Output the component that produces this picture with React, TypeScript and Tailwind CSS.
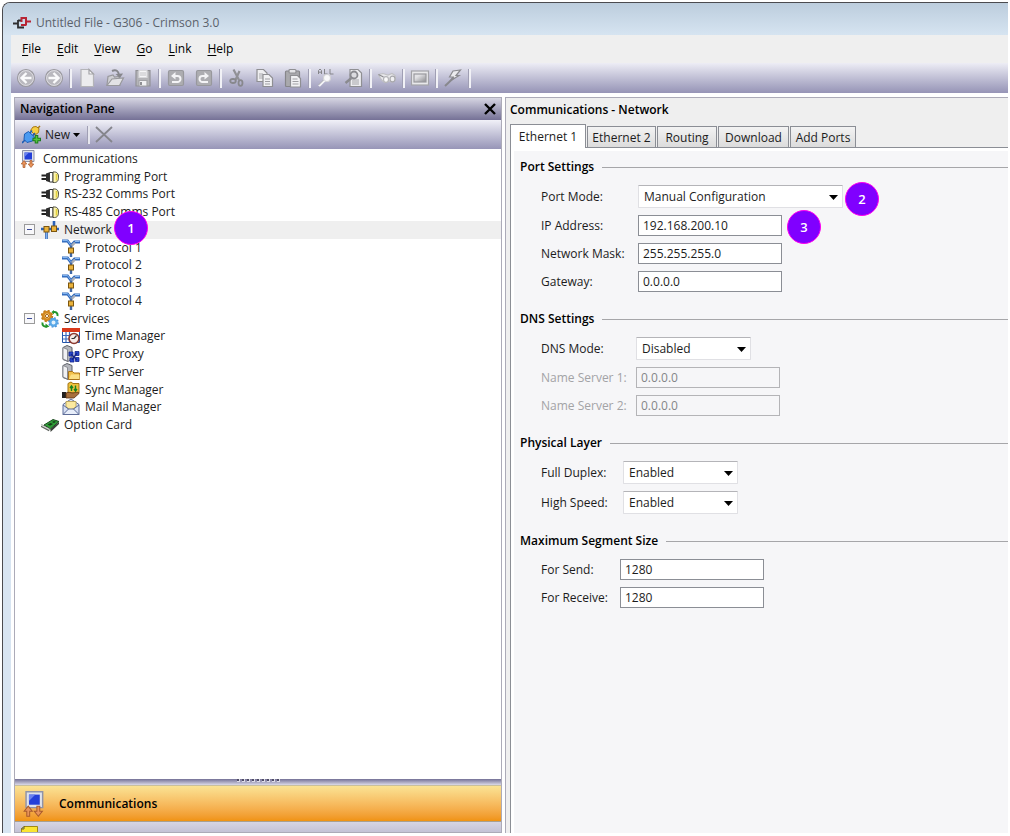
import { useState } from 'react';
import type { ReactNode } from 'react';
import clsx from 'clsx';

/* ---------- Toolbar icons ---------- */

const ToolIcon = ({ children }: { children: ReactNode }) => (
  <svg width="20" height="20" viewBox="0 0 20 20" fill="none" stroke="#8f8f93" strokeWidth="1.2" aria-hidden="true">
    {children}
  </svg>
);

const BackIcon = () => (
  <ToolIcon>
    <circle cx="10" cy="10" r="8.5" fill="#b9b8be" stroke="#9b9aa0" />
    <circle cx="10" cy="10" r="7.4" stroke="#dddce2" strokeWidth="1" />
    <path d="M15.500 10H6M10.500 5 5.500 10l5 5" stroke="#fbfbfc" strokeWidth="2.4" />
  </ToolIcon>
);

const ForwardIcon = () => (
  <ToolIcon>
    <circle cx="10" cy="10" r="8.5" fill="#b9b8be" stroke="#9b9aa0" />
    <circle cx="10" cy="10" r="7.4" stroke="#dddce2" strokeWidth="1" />
    <path d="M4.500 10H14M9.500 5l5 5-5 5" stroke="#fbfbfc" strokeWidth="2.4" />
  </ToolIcon>
);

const NewFileIcon = () => (
  <ToolIcon>
    <path d="M4 1.500h8l4.500 4.500v12.500H4z" fill="#ececee" stroke="#b4b4b8" />
    <path d="M12 1.500V6h4.500z" fill="#fff" stroke="#a4a4a8" />
  </ToolIcon>
);

const OpenIcon = () => (
  <ToolIcon>
    <path d="m2 17 1-8.500 5-1.500 1.500 2L14 8.500 15 17z" fill="#cfcfd3" stroke="#98989c" />
    <path d="M2 17.500 7 11l11.500-1-4 7.500z" fill="#e2e2e5" stroke="#98989c" />
    <path d="M7 3c4-2 6.500 0 7 4" stroke="#86868b" strokeWidth="2" />
    <path d="m10.500 6 7.500-.500-3 4.500z" fill="#86868b" stroke="none" />
  </ToolIcon>
);

const SaveIcon = () => (
  <ToolIcon>
    <path d="M3 2.500h14v15.500H3z" fill="#b4b4b8" stroke="#929297" />
    <path d="M6 2.500h8V9.500H6z" fill="#f5f5f7" stroke="#d8d8db" />
    <path d="M7 5h6M7 7h6" stroke="#c0c0c3" strokeWidth="1" />
    <path d="M6 12.500h8V18H6z" fill="#f1f1f3" stroke="#a3a3a7" />
    <path d="M8 14v3" strokeWidth="2" />
  </ToolIcon>
);

const UndoIcon = () => (
  <ToolIcon>
    <rect x="2.500" y="2.500" width="15" height="15" rx="1.500" fill="#adadb1" stroke="#98989d" />
    <path d="M6 14h5.500a3 3 0 0 0 0-6H7" stroke="#f4f4f6" strokeWidth="2" />
    <path d="M9.500 4 5 8l4.500 3.500z" fill="#f4f4f6" stroke="none" />
  </ToolIcon>
);

const RedoIcon = () => (
  <ToolIcon>
    <rect x="2.500" y="2.500" width="15" height="15" rx="1.500" fill="#adadb1" stroke="#98989d" />
    <path d="M14 14H8.500a3 3 0 0 1 0-6H13" stroke="#f4f4f6" strokeWidth="2" />
    <path d="M10.500 4 15 8l-4.500 3.500z" fill="#f4f4f6" stroke="none" />
  </ToolIcon>
);

const CutIcon = () => (
  <ToolIcon>
    <path d="M6.500 1.500 12 12M12.500 3 8.500 12" stroke="#919196" strokeWidth="2.200" />
    <ellipse cx="6" cy="13" rx="2.800" ry="2" stroke="#88888d" strokeWidth="1.800" />
    <ellipse cx="13.500" cy="15" rx="2" ry="2.800" stroke="#88888d" strokeWidth="1.800" />
  </ToolIcon>
);

const CopyIcon = () => (
  <ToolIcon>
    <path d="M2 1.500h6.500L12 5v8.500H2z" fill="#eeeef0" />
    <path d="M4 6h4M4 8h4M4 10h4" stroke="#a8a8ac" />
    <path d="M8 6.500h6l3.500 3.500v8.500H8z" fill="#f1f1f3" />
    <path d="M10 11h5M10 13.500h5M10 16h5" stroke="#a0a0a4" />
  </ToolIcon>
);

const PasteIcon = () => (
  <ToolIcon>
    <rect x="2.500" y="3" width="14" height="15.500" rx="1" fill="#a9a9ad" stroke="#86868a" />
    <rect x="6" y="1.500" width="7" height="3.500" rx="1" fill="#e4e4e7" />
    <path d="M7.500 7.500h7l3 3v8.500H7.500z" fill="#f2f2f4" />
    <path d="M9.500 11h5M9.500 13.500h6M9.500 16h6" stroke="#a0a0a4" />
  </ToolIcon>
);

const FindAllIcon = () => (
  <ToolIcon>
    <path d="M2.500 6V2.500L4 1l1.500 1.500V6M2.500 4.200h3M8.500 1v5h3M14 1v5h3.500" stroke="#85858a" strokeWidth="1" />
    <circle cx="11" cy="10" r="3.500" fill="#f8f8fa" stroke="#d2d2d6" />
    <path d="m8.500 12.500-5.500 5.500" stroke="#f4f4f6" strokeWidth="2.400" />
    <path d="m7.500 12-5 5" stroke="#a5a5aa" strokeWidth="1" />
  </ToolIcon>
);

const FindFileIcon = () => (
  <ToolIcon>
    <path d="M6 1.500h8L17.500 5v13.500H6z" fill="#ededf0" />
    <path d="M8 12h7M8 14h7M8 16h7" stroke="#a6a6aa" strokeWidth="1" />
    <circle cx="10" cy="7" r="3.500" fill="#dcdce0" stroke="#8a8a8f" strokeWidth="1.800" />
    <path d="m7.500 10-6 5" stroke="#8a8a8f" strokeWidth="2.400" />
  </ToolIcon>
);

const BinocularsIcon = () => (
  <ToolIcon>
    <path d="M1.500 6.500 6 5.500l5 1.500 4-1.500 3 2c1.500 4-.500 6.500-3.500 6.500L12 13l-3 1.500c-3 0-5.500-3.500-7.500-8z" fill="#e9e9ec" stroke="#c0c0c4" />
    <ellipse cx="9" cy="11.500" rx="2.500" ry="2.800" fill="#fbfbfc" stroke="#b6b6ba" />
    <ellipse cx="15.500" cy="11" rx="2.500" ry="2.800" fill="#f0f0f2" stroke="#a8a8ac" />
    <path d="m1.500 6.500 5 2.500" stroke="#8b8b90" />
  </ToolIcon>
);

const ScreenIcon = () => (
  <ToolIcon>
    <defs>
      <linearGradient id="screenShade" x1="0" y1="0" x2="1" y2="1">
        <stop offset="0.300" stopColor="#e2e2e5" />
        <stop offset="1" stopColor="#8b8b8f" />
      </linearGradient>
    </defs>
    <rect x="1.500" y="3" width="17" height="14" fill="#e8e8ea" stroke="#a3a3a8" />
    <rect x="4" y="6" width="12" height="8" fill="url(#screenShade)" stroke="#99999e" />
  </ToolIcon>
);

const BoltIcon = () => (
  <ToolIcon>
    <path d="M10 3 17.500 2 13 7.500h3L7 13l3-4H6.500z" fill="#ebebee" stroke="#8a8a8f" />
    <path d="M2 18 11 9.500" stroke="#88888d" strokeWidth="2" />
  </ToolIcon>
);

/* ---------- Tree icons ---------- */

const TreeIcon = ({ children, size = 18 }: { children: ReactNode; size?: number }) => (
  <svg width={size} height={size} viewBox="0 0 18 18" fill="none" className="shrink-0" aria-hidden="true">
    {children}
  </svg>
);

const CommsIcon = ({ size = 18 }: { size?: number }) => (
  <TreeIcon size={size}>
    <path d="M3.500 .500h11.500v11H3.500z" fill="#dfe2ea" stroke="#8f93a8" />
    <path d="M5.500 2.500h7.500v7H5.500z" fill="#2440d8" />
    <path d="M5.500 2.500h4.500L5.500 7z" fill="#6a82ee" />
    <path d="M5 10.500 7.800 14H6v3.500H4V14H2.200zM12 17.500 9.200 14H11v-3.500h2V14h1.800z" fill="#e8935a" stroke="#a85a2c" strokeWidth=".7" />
  </TreeIcon>
);

const PortIcon = () => (
  <TreeIcon>
    <path d="M.500 7.500H6M.500 11H6" stroke="#222" strokeWidth="2" />
    <path d="M5 5.500 8 4.500v9.500l-3-1z" fill="#2d2d2d" />
    <path d="M8.500 4.500H12v9.500H8.500z" fill="#fff" stroke="#333" />
    <path d="M12 4c4.500-.500 5.500 2 5.500 5.200S16.500 15 12 14.500z" fill="#fbf3b0" stroke="#4a4a3c" />
    <path d="M15.500 6v6.500" stroke="#e3d23c" strokeWidth="1.600" />
  </TreeIcon>
);

const NetworkIcon = () => (
  <TreeIcon>
    <path d="M0 8h18" stroke="#2b62b8" strokeWidth="2.400" />
    <path d="M5.500 9v9M13 0v8" stroke="#2b62b8" strokeWidth="2.600" />
    <path d="M5.500 11v7" stroke="#7fb0ee" strokeWidth="1" />
    <rect x="3" y="5.500" width="5" height="5.500" fill="#e9b23c" stroke="#7d560f" />
    <rect x="10.500" y="5" width="5" height="5.500" fill="#e9b23c" stroke="#7d560f" />
  </TreeIcon>
);

const ProtocolIcon = () => (
  <TreeIcon>
    <path d="M0 2h5.500L9 6.500 12.500 3H18" stroke="#2f68bc" strokeWidth="2.800" />
    <path d="M.500 1.600H5.500l3 4M13 2.500h4.500" stroke="#8cbcf4" strokeWidth="1" />
    <path d="m9 7.500 4-4" stroke="#a9aeb8" strokeWidth="2.400" />
    <path d="M9 6.500v11.500" stroke="#3f68a8" strokeWidth="2.400" />
    <rect x="6.500" y="9" width="5" height="5" fill="#e9b23c" stroke="#7d560f" />
  </TreeIcon>
);

const ServicesIcon = () => (
  <TreeIcon>
    <circle cx="6" cy="6" r="3.800" fill="#f6e0b4" stroke="#d48a22" strokeWidth="2.800" />
    <circle cx="6" cy="6" r="5.400" stroke="#c07a18" strokeWidth="1.600" strokeDasharray="2.200 2.040" />
    <circle cx="6" cy="6" r="1.600" fill="#fff" stroke="#a8640e" />
    <circle cx="12.500" cy="12.500" r="3.200" fill="#e4f2fc" stroke="#5aa9e8" strokeWidth="2.400" />
    <circle cx="12.500" cy="12.500" r="4.600" stroke="#4a94dc" strokeWidth="1.400" strokeDasharray="1.800 1.810" />
    <path d="M12.500 2c2.500-.500 4.500 1 4 4M6 16.500c-3 .500-5-1-4.500-4" stroke="#23962c" strokeWidth="2" />
    <path d="m4.500 13.500 4 3-4 1.500zM13 0v4.500L10.500 2z" fill="#23962c" />
  </TreeIcon>
);

const TimeIcon = () => (
  <TreeIcon>
    <path d="M.500 1.500h17v14H.500z" fill="#fff" stroke="#2454a8" />
    <path d="M0 1h18v4H0z" fill="#d83a1c" />
    <path d="M1 8.500h9M1 12h9M4 5v10M7.500 5v10" stroke="#3a6bc0" strokeWidth="1.200" />
    <circle cx="12" cy="11.500" r="5" fill="#f8ece8" stroke="#8c3a30" strokeWidth="1.600" />
    <path d="m12 11.500 2.500-3M12 11.500H9.500" stroke="#333" strokeWidth="1.200" />
  </TreeIcon>
);

const ServerBody = () => (
  <>
    <path d="m1 2.500 4-2 5 2v11l-4 3-5-2z" fill="#b4b6bc" stroke="#5e6168" />
    <path d="m1 2.500 4.500 2v11.500L1 14z" fill="#f1f1f3" stroke="#777a82" strokeWidth=".8" />
  </>
);

const OpcIcon = () => (
  <TreeIcon>
    <ServerBody />
    <path d="M7 7h4v4H7zM13 6.500h4v4h-4zM8 13h4v4H8zM13.500 12.500H17v4h-3.500z" fill="#2748d0" stroke="#14248a" strokeWidth=".8" />
    <path d="m9 9 6 6M15 8l-5 7" stroke="#14248a" strokeWidth="1.300" />
  </TreeIcon>
);

const FtpIcon = () => (
  <TreeIcon>
    <ServerBody />
    <path d="M6.500 16.500V8.500h4l1.500 1.500h5.500v6.500z" fill="#f2c04a" stroke="#a8721a" />
    <path d="m7 16 2-4.500h8.500V16z" fill="#fbdf86" />
  </TreeIcon>
);

const SyncIcon = () => (
  <TreeIcon>
    <path d="M6 2.500 9 1l2 1.500h6V12H6z" fill="#f0c23c" stroke="#a37412" />
    <path d="M9.500 10V5.500M8 7l1.500-2L11 7M13.500 4.500V9M12 8l1.500 2L15 8" stroke="#17821f" strokeWidth="1.400" />
    <path d="M0 11h4v6H0z" fill="#222" />
    <path d="M4 12c3-1.500 4 0 7 0 4-1 6-1 6 .500L12 17H4z" fill="#a8703c" stroke="#5b3312" strokeWidth=".8" />
  </TreeIcon>
);

const MailIcon = () => (
  <TreeIcon>
    <path d="m1 6.500 8-5.500 8 5.500v10H1z" fill="#d7e0f4" stroke="#5d6c98" />
    <path d="M4 3.500h10V9l-5 3-5-3z" fill="#fbe9a0" stroke="#b59c4a" strokeWidth=".8" />
    <path d="m1 16.500 5.500-5.500h5l5.500 5.500zM1 7l5.500 4M17 7l-5.500 4" fill="#e8eefa" stroke="#5d6c98" />
  </TreeIcon>
);

const CardIcon = () => (
  <TreeIcon>
    <path d="m3 9 9-5.500 6 2-8.500 7.500z" fill="#2f9c38" stroke="#1c4a20" />
    <path d="m9.500 13 8.500-7v2L9.500 16z" fill="#3a3f3a" />
    <path d="m6.500 8.500 3-1.500 2.500 1-3 1.700zM11 6l2-1 2 .800-2 1.200z" fill="#173d1a" />
    <path d="m0 9.500 8.500 4.500" stroke="#5e635e" strokeWidth="2.600" />
    <path d="m0 9 8.500 4.500" stroke="#d9dcd7" strokeWidth="1.200" />
  </TreeIcon>
);

/* ---------- Data ---------- */

const menus = ['File', 'Edit', 'View', 'Go', 'Link', 'Help'];

const toolGroups = [
  [
    { label: 'Back', Icon: BackIcon },
    { label: 'Forward', Icon: ForwardIcon },
  ],
  [
    { label: 'New', Icon: NewFileIcon },
    { label: 'Open', Icon: OpenIcon },
    { label: 'Save', Icon: SaveIcon },
  ],
  [
    { label: 'Undo', Icon: UndoIcon },
    { label: 'Redo', Icon: RedoIcon },
  ],
  [
    { label: 'Cut', Icon: CutIcon },
    { label: 'Copy', Icon: CopyIcon },
    { label: 'Paste', Icon: PasteIcon },
  ],
  [
    { label: 'Find all', Icon: FindAllIcon },
    { label: 'Find in file', Icon: FindFileIcon },
  ],
  [{ label: 'Watch', Icon: BinocularsIcon }],
  [{ label: 'Screen', Icon: ScreenIcon }],
  [{ label: 'Download', Icon: BoltIcon }],
];

const indents = ['pl-1', 'pl-[26px]', 'pl-[47px]'];

const tree = [
  { label: 'Communications', level: 0, Icon: CommsIcon },
  { label: 'Programming Port', level: 1, Icon: PortIcon },
  { label: 'RS-232 Comms Port', level: 1, Icon: PortIcon },
  { label: 'RS-485 Comms Port', level: 1, Icon: PortIcon },
  { label: 'Network', level: 1, Icon: NetworkIcon, open: true, step: 1 },
  { label: 'Protocol 1', level: 2, Icon: ProtocolIcon },
  { label: 'Protocol 2', level: 2, Icon: ProtocolIcon },
  { label: 'Protocol 3', level: 2, Icon: ProtocolIcon },
  { label: 'Protocol 4', level: 2, Icon: ProtocolIcon },
  { label: 'Services', level: 1, Icon: ServicesIcon, open: true },
  { label: 'Time Manager', level: 2, Icon: TimeIcon },
  { label: 'OPC Proxy', level: 2, Icon: OpcIcon },
  { label: 'FTP Server', level: 2, Icon: FtpIcon },
  { label: 'Sync Manager', level: 2, Icon: SyncIcon },
  { label: 'Mail Manager', level: 2, Icon: MailIcon },
  { label: 'Option Card', level: 1, Icon: CardIcon },
];

const tabs = [
  { label: 'Ethernet 1', width: 'w-[76px]' },
  { label: 'Ethernet 2', width: 'w-[69px]' },
  { label: 'Routing', width: 'w-[60px]' },
  { label: 'Download', width: 'w-[71px]' },
  { label: 'Add Ports', width: 'w-[66px]' },
];

/* ---------- Shared pieces ---------- */

const Separator = () => (
  <div className="w-[5px] flex justify-center">
    <div className="w-[3px] h-[19px] border-l border-[#a09fb4] bg-[#f1f1f6]"></div>
  </div>
);

const StepBadge = ({ step, className }: { step: number; className: string }) => (
  <span
    className={clsx(
      'absolute z-10 w-[34px] h-[34px] rounded-full bg-[#8000ff] border border-[#ff00f0] text-white text-[13px] font-semibold flex items-center justify-center',
      className,
    )}
  >
    {step}
  </span>
);

function Section({ title, children, className }: { title: string; children: ReactNode; className?: string }) {
  return (
    <section className={className}>
      <div className="flex items-center gap-2 h-5">
        <h2 className="font-semibold text-black whitespace-nowrap">{title}</h2>
        <div className="flex-1 h-px bg-[#a6a6a9]"></div>
      </div>
      {children}
    </section>
  );
}

type FieldProps = {
  id: string;
  label: string;
  value: string;
  labelWidth: string;
  disabled?: boolean;
  step?: number;
};

function TextField({ id, label, value, labelWidth, disabled, step }: FieldProps) {
  return (
    <div className="flex items-center">
      <label htmlFor={id} className={clsx('shrink-0 whitespace-nowrap', labelWidth, disabled && 'text-[#a3a3a6]')}>
        {label}
      </label>
      <div className="relative">
        <input
          id={id}
          type="text"
          defaultValue={value}
          disabled={disabled}
          className={clsx(
            'block w-36 h-[21px] px-1 border outline-none',
            disabled ? 'border-[#b4b4b7] bg-[#f6f6f8] text-[#858588]' : 'border-[#8b8e95] bg-white',
          )}
        />
        {step && <StepBadge step={step} className="left-[149px] -top-[5px]" />}
      </div>
    </div>
  );
}

function SelectField({ id, label, value, labelWidth, step, width, options }: FieldProps & { width: string; options: string[] }) {
  return (
    <div className="flex items-center">
      <label htmlFor={id} className={clsx('shrink-0 whitespace-nowrap', labelWidth)}>
        {label}
      </label>
      <div className={clsx('relative', width)}>
        <select
          id={id}
          defaultValue={value}
          className="block w-full h-[23px] pl-[5px] appearance-none bg-white border border-[#e0e0e4] border-t-[#b4b4b8] rounded-[1px] outline-none"
        >
          {options.map((option) => (
            <option key={option}>{option}</option>
          ))}
        </select>
        <svg width="9" height="5" viewBox="0 0 9 5" className="absolute right-[5px] top-[10px] pointer-events-none">
          <path d="M0 0h9L4.500 5z" fill="#000" />
        </svg>
        {step && <StepBadge step={step} className="left-[207px] -top-[3px]" />}
      </div>
    </div>
  );
}

/* ---------- Panes ---------- */

function NavigationPane() {
  return (
    <nav className="w-[488px] shrink-0 flex flex-col border border-[#acabb8] bg-white overflow-hidden">
      <div className="h-[22px] shrink-0 flex items-center justify-between px-[5px] bg-linear-to-b from-[#d6d5e2] to-[#757196]">
        <h2 className="font-semibold text-black">Navigation Pane</h2>
        <button type="button" aria-label="Close" className="w-3 h-3">
          <svg width="12" height="12" viewBox="0 0 12 12" stroke="#000" strokeWidth="2.400">
            <path d="m1 1 10 10M11 1 1 11" />
          </svg>
        </button>
      </div>

      <div className="h-[29px] shrink-0 flex items-center pl-[7px] bg-linear-to-b from-[#f1f1f8] to-[#9795b7]">
        <button type="button" className="flex items-center">
          <svg width="19" height="19" viewBox="0 0 19 19" fill="none" aria-hidden="true">
            <path d="M8.500 5.500 11 2l3-.500 3 2-.500 4L13 10z" fill="#f6cf44" stroke="#a87a14" />
            <path d="m16 3 2-2" stroke="#a87a14" strokeWidth="1.500" />
            <path d="m2.500 9 4-2.500 6 5.500-2 4-5.500 1.500-3-3z" fill="#4a9af0" stroke="#1b5cb4" />
            <path d="m3 15-3 3M8 8l2-2.500M11 10.500l2-2.500" stroke="#1b5cb4" strokeWidth="1.600" />
            <path d="M14.500 10v8.500M10.500 14.500H19" stroke="#1f7a1f" strokeWidth="3.600" />
            <path d="M14.500 11v6.500M11.500 14.500H18" stroke="#52c43c" strokeWidth="1.600" />
          </svg>
          <span className="ml-1">New</span>
          <svg width="7" height="4" viewBox="0 0 7 4" className="ml-[3px]">
            <path d="M0 0h7L3.500 4z" fill="#000" />
          </svg>
        </button>
        <div className="ml-[7px] w-[3px] h-[18px] border-l border-[#a09fb4] bg-[#e6e6ee]"></div>
        <button type="button" aria-label="Delete" className="ml-[5px]">
          <svg width="18" height="17" viewBox="0 0 18 17" fill="none" stroke="#85858c" strokeWidth="1.800">
            <path d="m1 1 16 15M17 1 1 16" />
          </svg>
        </button>
      </div>

      <ul className="grid auto-rows-fr h-71 mt-px shrink-0">
        {tree.map(({ label, level, Icon, open, step }) => (
          <li key={label} className={clsx('relative flex items-center min-h-0', indents[level], step && 'bg-[#efefef]')}>
            {open && (
              <button
                type="button"
                aria-label={`Collapse ${label}`}
                className="absolute left-[9px] w-[11px] h-[11px] border border-[#9a9a9a] bg-[#f8f8fa] flex items-center justify-center"
              >
                <span className="w-[5px] h-px bg-[#3c4c9a]"></span>
              </button>
            )}
            <Icon />
            <span className={clsx('whitespace-nowrap', level === 0 ? 'ml-[6px]' : 'ml-[5px]')}>{label}</span>
            {step && <StepBadge step={step} className="left-[99px] -top-[10px]" />}
          </li>
        ))}
      </ul>

      <div className="flex-1"></div>

      <div className="h-[6px] shrink-0 flex items-start justify-center gap-[2px] bg-linear-to-b from-[#747196] to-[#dcdbe8]">
        {Array.from({ length: 9 }, (_, i) => (
          <span key={i} className="w-[3px] h-[3px] bg-[#4e4b66] border-r border-b border-[#dcdbe8]"></span>
        ))}
      </div>
      <button
        type="button"
        className="h-[37px] shrink-0 flex items-center pl-[6px] border-y border-t-[#c9bf9c] border-b-[#a8a090] bg-linear-to-b from-[#fae394] to-[#f0930f] font-semibold text-black"
      >
        <CommsIcon size={26} />
        <span className="ml-3">Communications</span>
      </button>
      <button type="button" aria-label="Next category" className="h-[10px] shrink-0 flex items-start pl-[6px] overflow-hidden bg-linear-to-b from-[#d6d5e3] to-[#c4c3d6]">
        <svg width="18" height="18" viewBox="0 0 18 18" className="mt-1">
          <path d="M3 .500h13.500v17H.500V3z" fill="#fbe532" stroke="#a08a14" />
          <path d="M.500 3 3 .500V3z" fill="#fff8b0" stroke="#4a4210" strokeWidth=".8" />
        </svg>
      </button>
    </nav>
  );
}

function SettingsPane() {
  const [active, setActive] = useState('Ethernet 1');

  return (
    <main className="flex-1 min-w-0 flex flex-col pl-1 border-l border-t border-[#acabb8] bg-[#efefef]">
      <h1 className="font-semibold text-black h-[23px] leading-[23px]">Communications - Network</h1>

      <div className="flex items-end h-[26px] shrink-0" role="tablist">
        {tabs.map(({ label, width }) => (
          <button
            key={label}
            type="button"
            role="tab"
            aria-selected={active === label}
            onClick={() => setActive(label)}
            className={clsx(
              'whitespace-nowrap border border-b-0 border-[#8b8e95] mr-px',
              width,
              active === label
                ? 'relative -mb-px h-6 bg-white'
                : 'h-[21px] pt-px bg-linear-to-b from-[#f3f3f3] to-[#dcdcdc]',
            )}
          >
            {label}
          </button>
        ))}
      </div>

      <div className="flex-1 border-t border-l border-[#8b8e95] bg-white pt-[3px] pl-[3px]">
        <form className="h-full bg-[#f6f6f8] pl-[6px] pt-[6px]">
          <Section title="Port Settings">
            <div className="pl-[21px] pt-2 flex flex-col gap-[7px]">
              <SelectField
                id="port-mode"
                label="Port Mode:"
                value="Manual Configuration"
                labelWidth="w-[97px]"
                width="w-[205px]"
                options={['Manual Configuration', 'DHCP', 'Disabled']}
                step={2}
              />
              <TextField id="ip" label="IP Address:" value="192.168.200.10" labelWidth="w-[97px]" step={3} />
              <TextField id="mask" label="Network Mask:" value="255.255.255.0" labelWidth="w-[97px]" />
              <TextField id="gateway" label="Gateway:" value="0.0.0.0" labelWidth="w-[97px]" />
            </div>
          </Section>

          <Section title="DNS Settings" className="mt-[17px]">
            <div className="pl-[21px] pt-2 flex flex-col gap-[7px]">
              <SelectField
                id="dns-mode"
                label="DNS Mode:"
                value="Disabled"
                labelWidth="w-[95px]"
                width="w-[115px]"
                options={['Disabled', 'Manual', 'Automatic']}
              />
              <TextField id="dns1" label="Name Server 1:" value="0.0.0.0" labelWidth="w-[95px]" disabled />
              <TextField id="dns2" label="Name Server 2:" value="0.0.0.0" labelWidth="w-[95px]" disabled />
            </div>
          </Section>

          <Section title="Physical Layer" className="mt-[17px]">
            <div className="pl-[21px] pt-2 flex flex-col gap-[7px]">
              <SelectField
                id="duplex"
                label="Full Duplex:"
                value="Enabled"
                labelWidth="w-[82px]"
                width="w-[115px]"
                options={['Enabled', 'Disabled']}
              />
              <SelectField
                id="speed"
                label="High Speed:"
                value="Enabled"
                labelWidth="w-[82px]"
                width="w-[115px]"
                options={['Enabled', 'Disabled']}
              />
            </div>
          </Section>

          <Section title="Maximum Segment Size" className="mt-[17px]">
            <div className="pl-[21px] pt-2 flex flex-col gap-[7px]">
              <TextField id="send" label="For Send:" value="1280" labelWidth="w-[79px]" />
              <TextField id="receive" label="For Receive:" value="1280" labelWidth="w-[79px]" />
            </div>
          </Section>
        </form>
      </div>
    </main>
  );
}

export default function App() {
  return (
    <div className="h-screen min-h-[660px] bg-white pl-[2px] pt-[2px] pr-[2px] pb-[3px] font-['Open_Sans','Noto_Sans',sans-serif] text-[12px] leading-4 text-[#1c1c1c]">
      <div className="h-full flex flex-col overflow-hidden rounded-tl-lg border-l border-t border-[#4b4b4f] bg-[#d8e5f2]">
        <header className="h-8 shrink-0 flex items-center pl-[10px] pt-2 bg-linear-to-b from-[#bccddd] to-[#d6e4f1] text-[#5b626b]">
          <svg width="18" height="14" viewBox="0 0 18 14" fill="none" aria-hidden="true">
            <path d="M0 7.500h5M5 4.500h3.500M5 4v8.500M4.200 11.500H11" stroke="#2e2e30" strokeWidth="1.800" />
            <path d="M8.500 6V2H13v7.500M8 9h5M13 5.500h5" stroke="#b82434" strokeWidth="2" />
          </svg>
          <span className="ml-[5px]">Untitled File - G306 - Crimson 3.0</span>
        </header>

        <div className="flex-1 min-h-0 ml-2 flex flex-col bg-white">
          <div className="h-7 shrink-0 flex items-center gap-4 pl-[11px] bg-[#efefef] text-black">
            {menus.map((menu) => (
              <button key={menu} type="button">
                <span className="underline underline-offset-2">{menu[0]}</span>
                {menu.slice(1)}
              </button>
            ))}
          </div>

          <div className="h-[30px] shrink-0 flex items-center pl-px bg-linear-to-b from-[#ededf5] to-[#9694b6]" role="toolbar">
            {toolGroups.map((group, i) => (
              <div key={i} className="flex items-center">
                {group.map(({ label, Icon }) => (
                  <button key={label} type="button" aria-label={label} className="w-7 flex justify-center">
                    <Icon />
                  </button>
                ))}
                <Separator />
              </div>
            ))}
          </div>

          <div className="flex-1 min-h-0 flex gap-[3px] pt-1 pl-[3px]">
            <NavigationPane />
            <SettingsPane />
          </div>
        </div>
      </div>
    </div>
  );
}
